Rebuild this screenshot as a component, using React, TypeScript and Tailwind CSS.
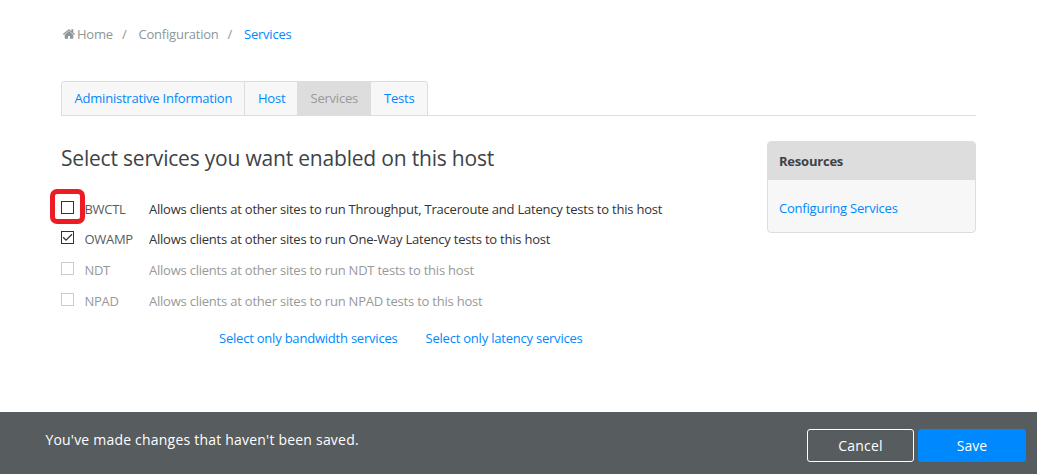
type Service = {
  name: string;
  description: string;
  checked?: boolean;
  disabled?: boolean;
  highlighted?: boolean;
};

const services: Service[] = [
  { name: "BWCTL", description: "Allows clients at other sites to run Throughput, Traceroute and Latency tests to this host", highlighted: true },
  { name: "OWAMP", description: "Allows clients at other sites to run One-Way Latency tests to this host", checked: true },
  { name: "NDT", description: "Allows clients at other sites to run NDT tests to this host", disabled: true },
  { name: "NPAD", description: "Allows clients at other sites to run NPAD tests to this host", disabled: true },
];

function HomeIcon() {
  return (
    <svg viewBox="90 230 1612 1340" className="mr-[2px] h-[10px] w-[12px] shrink-0" fill="currentColor">
      <path d="M1472 992v480q0 26-19 45t-45 19h-384v-384h-256v384h-384q-26 0-45-19t-19-45v-480q0-1 .5-3t.5-3l575-474 575 474q1 2 1 6zm223-69l-62 74q-8 9-21 11h-3q-13 0-21-7l-692-577-692 577q-12 8-24 7-13-2-21-11l-62-74q-8-10-7-23.500t11-21.500l719-599q32-26 76-26t76 26l244 204v-195q0-14 9-23t23-9h192q14 0 23 9t9 23v408l219 182q10 8 11 21.500t-7 23.500z" />
    </svg>
  );
}

function Breadcrumb() {
  return (
    <nav className="flex h-5 items-center pl-[2px] text-[#8d9699]">
      <HomeIcon />
      <a className="w-[45px] whitespace-nowrap">Home</a>
      <span className="w-[16.500px]">/</span>
      <a className="w-[89px] whitespace-nowrap">Configuration</a>
      <span className="w-[16.500px]">/</span>
      <a className="text-[#0088ff]">Services</a>
    </nav>
  );
}

function Tabs() {
  return (
    <div className="mt-[37px] flex h-[35px] border-b border-[#dddddd]">
      <div className="flex h-[35px] w-[367px] overflow-hidden rounded-t-[3px] border border-[#dddddd] bg-[#f7f7f7] text-[#0088ff]">
        <a className="flex h-[33px] w-[183px] items-center whitespace-nowrap border-r border-[#dddddd] pb-[2px] pl-[12.500px]">Administrative Information</a>
        <a className="flex h-[33px] w-[52px] items-center pb-[2px] pl-[13px]">Host</a>
        <a className="flex h-[33px] w-[74px] items-center bg-[#dddddd] pb-[2px] pl-[13.500px] text-[#999999]">Services</a>
        <a className="flex h-[33px] w-[56px] items-center pb-[2px] pl-[13px]">Tests</a>
      </div>
    </div>
  );
}

function ServiceRow({ service }: { service: Service }) {
  const { name, description, checked, disabled, highlighted } = service;
  return (
    <label className={`flex items-center ${checked || highlighted ? "h-[30px]" : "h-[31px]"}`}>
      <span className={`relative mr-[10.500px] -mt-[3px] flex h-[13px] w-[13px] shrink-0 border bg-white ${disabled ? "border-[#cccccc]" : "border-[#333333]"}`}>
        {checked && (
          <svg viewBox="0 0 11 11" className="h-[11px] w-[11px]" fill="none" stroke="#333333" strokeWidth="1.3">
            <path d="M1.200 5.300 4 8.100 10 2.200" />
          </svg>
        )}
        {highlighted && <span className="absolute -left-[12px] -top-[13px] h-[35px] w-[35px] rounded-[7px] border-[5px] border-[#ed1c24]" />}
      </span>
      <span className={`w-[64.400px] shrink-0 tracking-[-0.300px] ${disabled ? "text-[#999999]" : "text-[#575c5f]"}`}>{name}</span>
      <span className={`whitespace-nowrap ${disabled ? "text-[#999999]" : "text-[#333333]"}`}>{description}</span>
    </label>
  );
}

export default function App() {
  return (
    <div className="flex h-[474px] w-[1037px] flex-col overflow-hidden bg-white font-['Open_Sans',sans-serif] text-[13px] leading-5 tracking-[-0.215px]">
      <main className="ml-[61px] w-[915px] grow pt-6">
        <Breadcrumb />
        <Tabs />
        <div className="flex items-start justify-between pt-[25px]">
          <section>
            <h1 className="h-[35px] whitespace-nowrap text-[21px] leading-[34px] tracking-[-0.195px] text-[#3d4347]">Select services you want enabled on this host</h1>
            <div className="pt-[18px]">
              {services.map((service) => (
                <ServiceRow key={service.name} service={service} />
              ))}
            </div>
            <div className="mt-[12px] flex pl-[158px] text-[#0088ff]">
              <a className="w-[206.500px] whitespace-nowrap">Select only bandwidth services</a>
              <a className="whitespace-nowrap">Select only latency services</a>
            </div>
          </section>
          <aside className="h-[92px] w-[209px] overflow-hidden rounded-[4px] border border-[#dddddd] bg-[#f7f7f7]">
            <h2 className="flex h-[38px] items-center bg-[#dddddd] pl-[11px] font-bold text-[#3d4347]">Resources</h2>
            <a className="block pl-[11px] pt-[18px] text-[#0088ff]">Configuring Services</a>
          </aside>
        </div>
      </main>
      <footer className="flex h-[62px] shrink-0 items-start bg-[#575c5f] pl-[45.400px] pr-[11px] pt-[17px] text-[14px] tracking-[0.210px] text-white">
        <p className="grow whitespace-nowrap pt-px">You've made changes that haven't been saved.</p>
        <button className="mr-1 h-[33px] w-[107px] rounded-[3px] border border-white">Cancel</button>
        <button className="h-[33px] w-[108px] rounded-[3px] bg-[#0088ff] tracking-normal">Save</button>
      </footer>
    </div>
  );
}
